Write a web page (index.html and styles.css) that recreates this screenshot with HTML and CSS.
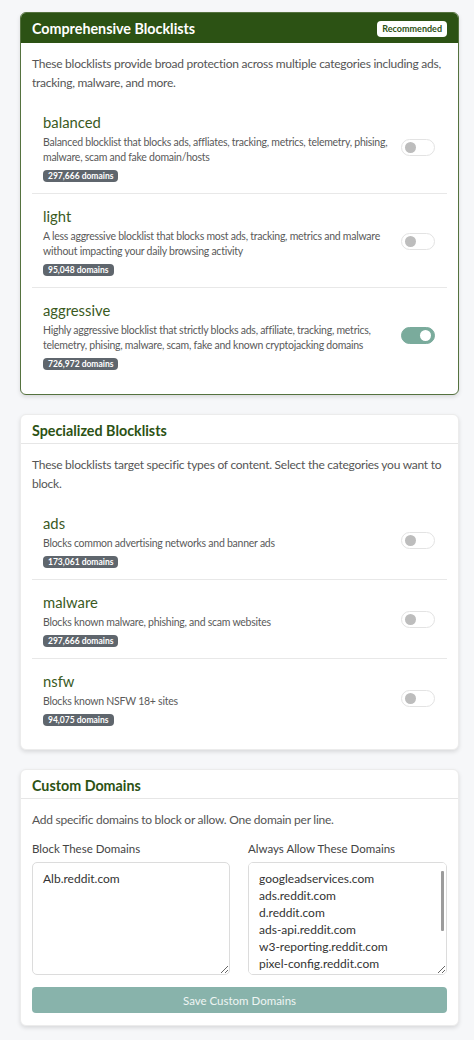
FILE: index.html
```html
<!DOCTYPE html>
<html lang="en">
<head>
<meta charset="utf-8">
<title>Blocklists</title>
<link rel="stylesheet" href="styles.css">
</head>
<body>
<main class="page">
  <section class="card card-featured">
    <header class="card-header header-dark">
      <h2 class="card-title">Comprehensive Blocklists</h2>
      <span class="rec-badge">Recommended</span>
    </header>
    <div class="card-body">
      <p class="card-desc">These blocklists provide broad protection across multiple categories including ads, tracking, malware, and more.</p>
      <ul class="list">
        <li class="item">
          <div class="item-info">
            <h3 class="item-title">balanced</h3>
            <p class="item-desc">Balanced blocklist that blocks ads, affliates, tracking, metrics, telemetry, phising, malware, scam and fake domain/hosts</p>
            <span class="count">297,666 domains</span>
          </div>
          <span class="toggle"><span class="knob"></span></span>
        </li>
        <li class="item">
          <div class="item-info">
            <h3 class="item-title">light</h3>
            <p class="item-desc">A less aggressive blocklist that blocks most ads, tracking, metrics and malware without impacting your daily browsing activity</p>
            <span class="count">95,048 domains</span>
          </div>
          <span class="toggle"><span class="knob"></span></span>
        </li>
        <li class="item">
          <div class="item-info">
            <h3 class="item-title">aggressive</h3>
            <p class="item-desc">Highly aggressive blocklist that strictly blocks ads, affiliate, tracking, metrics, telemetry, phising, malware, scam, fake and known cryptojacking domains</p>
            <span class="count">726,972 domains</span>
          </div>
          <span class="toggle on"><span class="knob"></span></span>
        </li>
      </ul>
    </div>
  </section>

  <section class="card">
    <header class="card-header">
      <h2 class="card-title">Specialized Blocklists</h2>
    </header>
    <div class="card-body">
      <p class="card-desc">These blocklists target specific types of content. Select the categories you want to block.</p>
      <ul class="list">
        <li class="item">
          <div class="item-info">
            <h3 class="item-title">ads</h3>
            <p class="item-desc">Blocks common advertising networks and banner ads</p>
            <span class="count">173,061 domains</span>
          </div>
          <span class="toggle"><span class="knob"></span></span>
        </li>
        <li class="item">
          <div class="item-info">
            <h3 class="item-title">malware</h3>
            <p class="item-desc">Blocks known malware, phishing, and scam websites</p>
            <span class="count">297,666 domains</span>
          </div>
          <span class="toggle"><span class="knob"></span></span>
        </li>
        <li class="item">
          <div class="item-info">
            <h3 class="item-title">nsfw</h3>
            <p class="item-desc">Blocks known NSFW 18+ sites</p>
            <span class="count">94,075 domains</span>
          </div>
          <span class="toggle"><span class="knob"></span></span>
        </li>
      </ul>
    </div>
  </section>

  <section class="card">
    <header class="card-header">
      <h2 class="card-title">Custom Domains</h2>
    </header>
    <div class="card-body">
      <p class="card-desc desc-tight">Add specific domains to block or allow. One domain per line.</p>
      <div class="fields">
        <label class="field">
          <span class="field-label">Block These Domains</span>
          <span class="area-wrap">
            <textarea class="domains">Alb.reddit.com</textarea>
          </span>
        </label>
        <label class="field">
          <span class="field-label">Always Allow These Domains</span>
          <span class="area-wrap">
            <textarea class="domains">googleadservices.com
ads.reddit.com
d.reddit.com
ads-api.reddit.com
w3-reporting.reddit.com
pixel-config.reddit.com
events.reddit.com
alb.reddit.com
stats.reddit.com
gql.reddit.com
</textarea>
            <span class="scroll-thumb"></span>
          </span>
        </label>
      </div>
      <button class="save-btn" type="button">Save Custom Domains</button>
    </div>
  </section>
</main>
</body>
</html>
```

FILE: styles.css
```css
* { box-sizing: border-box; }

html, body {
  margin: 0;
  padding: 0;
  background: #f6f7f9;
  font-family: Lato, "Noto Sans", "Liberation Sans", sans-serif;
  color: #555;
}

.page {
  width: 474px;
  padding: 12px 15px 16px 20px;
  display: flex;
  flex-direction: column;
  gap: 19px;
}

.card {
  background: #fff;
  border: 1px solid #ececec;
  border-radius: 6px;
  box-shadow: 0 2px 4px rgba(0, 0, 0, 0.12);
  overflow: hidden;
}

.card-featured {
  border-color: #55723f;
}

.card-header {
  height: 29px;
  padding: 2px 11px 0;
  display: flex;
  align-items: center;
  justify-content: space-between;
  border-bottom: 1px solid #e6e6e6;
}

.header-dark {
  height: 30px;
  padding-top: 1px;
  background: #2c5214;
  border-bottom: none;
}

.card-title {
  margin: 0;
  font-size: 14.3px;
  font-weight: 700;
  color: #2c5214;
}

.header-dark .card-title {
  color: #fff;
}

.rec-badge {
  background: #fff;
  color: #2c5214;
  font-size: 9px;
  font-weight: 700;
  padding: 2px 5px;
  border-radius: 4px;
  line-height: 12px;
}

.card-body {
  padding: 11px 11px 12px;
}

.card-featured .card-body {
  padding-bottom: 13px;
}

.card-desc {
  margin: 0 0 8px;
  font-size: 12px;
  letter-spacing: -0.25px;
  line-height: 19px;
  color: #555;
}

.desc-tight {
  margin-bottom: 11px;
}

.list {
  list-style: none;
  margin: 0;
  padding: 0;
}

.item {
  display: flex;
  align-items: center;
  gap: 8px;
  padding: 12px 12px 11px 11px;
  border-bottom: 1px solid #e8e8e8;
}

.item:last-child {
  border-bottom: none;
}

.item-info {
  flex: 1;
  min-width: 0;
  display: flex;
  flex-direction: column;
  align-items: flex-start;
}

.item-title {
  margin: 0 0 3px;
  font-size: 14.8px;
  font-weight: 400;
  line-height: 20px;
  color: #3a5a1e;
}

.item-desc {
  margin: 0;
  font-size: 10.5px;
  letter-spacing: -0.25px;
  line-height: 15px;
  color: #5a5a5a;
}

.count {
  margin-top: 5px;
  background: #5f666d;
  color: #fff;
  font-size: 8.5px;
  font-weight: 700;
  line-height: 12px;
  padding: 0 5px;
  border-radius: 4px;
}

.toggle {
  flex: none;
  width: 34px;
  height: 17px;
  border-radius: 9px;
  border: 1px solid #e3e3e3;
  background: #fff;
  display: flex;
  align-items: center;
  padding: 0 3px;
}

.knob {
  width: 11px;
  height: 11px;
  border-radius: 50%;
  background: #bdbdbd;
}

.toggle.on {
  background: #7aab9c;
  border-color: #7aab9c;
  justify-content: flex-end;
}

.toggle.on .knob {
  background: #fff;
}

.fields {
  display: grid;
  grid-template-columns: 198px 199px;
  column-gap: 18px;
}

.field {
  display: flex;
  flex-direction: column;
}

.field-label {
  font-size: 11.5px;
  line-height: 18px;
  color: #444;
  margin-bottom: 4px;
}

.area-wrap {
  position: relative;
  display: block;
}

.domains {
  display: block;
  width: 100%;
  height: 113px;
  resize: vertical;
  border: 1px solid #dcdcdc;
  border-radius: 5px;
  padding: 7px 10px 5px;
  font-family: inherit;
  font-size: 12px;
  line-height: 17px;
  color: #333;
  background: #fff;
}

.scroll-thumb {
  position: absolute;
  right: 3px;
  top: 9px;
  width: 3px;
  height: 60px;
  background: #9c9c9c;
  border-radius: 1px;
}

.save-btn {
  display: block;
  width: 100%;
  margin-top: 12px;
  height: 26px;
  border: none;
  border-radius: 4px;
  background: #88b3ab;
  color: #eef5f3;
  font-family: inherit;
  font-size: 11.5px;
}
```
